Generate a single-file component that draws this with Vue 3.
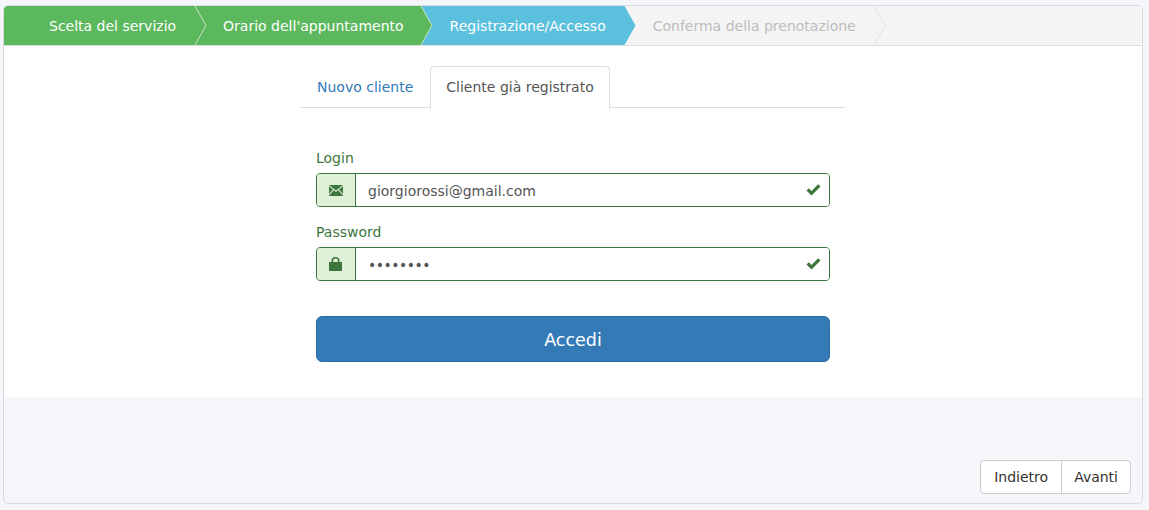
<script setup>
const steps = [
  { label: 'Scelta del servizio', state: 'done' },
  { label: "Orario dell'appuntamento", state: 'done' },
  { label: 'Registrazione/Accesso', state: 'current' },
  { label: 'Conferma della prenotazione', state: 'todo' },
]
</script>

<template>
  <div class="page">
    <div class="wizard">
      <!-- Steps -->
      <ul class="steps">
        <li v-for="step in steps" :key="step.label" class="step" :class="step.state">
          {{ step.label }}
          <svg class="arrow" width="13" height="39" viewBox="0 0 13 39">
            <path class="arrow-fill" d="M0 0 L1 0 L12 19.5 L1 39 L0 39 Z" />
            <path class="arrow-line" d="M1 0 L12 19.5 L1 39" />
          </svg>
        </li>
      </ul>

      <div class="content">
        <div class="login">
          <!-- Tabs -->
          <div class="tabs">
            <a class="tab">Nuovo cliente</a>
            <a class="tab active">Cliente già registrato</a>
          </div>

          <form class="form" @submit.prevent>
            <label class="label">Login</label>
            <div class="field">
              <span class="addon">
                <svg width="14" height="11" viewBox="0 0 14 11">
                  <path d="M0 0 H14 L7 5.6 Z" />
                  <path d="M0 1.2 L4 4.6 L0 9 Z" />
                  <path d="M14 1.2 L10 4.6 L14 9 Z" />
                  <path d="M4.8 5.3 L7 7.1 L9.2 5.3 L14 10.5 V11 H0 V10.5 Z" />
                </svg>
              </span>
              <input class="input" type="text" value="giorgiorossi@gmail.com" />
              <svg class="check" width="15" height="12" viewBox="0 0 15 12">
                <path d="M0.5 6.5 L2.8 4.2 L5.5 6.9 L12.2 0.2 L14.5 2.5 L5.5 11.5 Z" />
              </svg>
            </div>

            <label class="label">Password</label>
            <div class="field">
              <span class="addon">
                <svg class="lock" width="13" height="14" viewBox="0 0 13 14">
                  <path fill-rule="evenodd" d="M6.5 0 C9 0 10.5 1.4 10.5 3.5 V5 H12.5 C12.8 5 13 5.2 13 5.5 V13.5 C13 13.8 12.8 14 12.5 14 H0.5 C0.2 14 0 13.8 0 13.5 V5.5 C0 5.2 0.2 5 0.5 5 H2.5 V3.5 C2.5 1.4 4 0 6.5 0 Z M6.5 1.6 C5.1 1.6 4.2 2.3 4.2 3.6 V5 H8.8 V3.6 C8.8 2.3 7.9 1.6 6.5 1.6 Z" />
                </svg>
              </span>
              <input class="input password" type="password" value="password" />
              <svg class="check" width="15" height="12" viewBox="0 0 15 12">
                <path d="M0.5 6.5 L2.8 4.2 L5.5 6.9 L12.2 0.2 L14.5 2.5 L5.5 11.5 Z" />
              </svg>
            </div>

            <button class="submit" type="submit">Accedi</button>
          </form>
        </div>
      </div>

      <div class="footer">
        <div class="btn-group">
          <button class="btn" type="button">Indietro</button>
          <button class="btn" type="button">Avanti</button>
        </div>
      </div>
    </div>
  </div>
</template>

<style>
html,
body {
  margin: 0;
  background: #f5f6fa;
}
</style>

<style scoped>
.page {
  height: 510px;
  box-sizing: border-box;
  padding: 5px 6px 5px 3px;
  font-family: "DejaVu Sans", Verdana, sans-serif;
  font-size: 14px;
  color: #555;
}

.wizard {
  height: 499px;
  box-sizing: border-box;
  border: 1px solid #d9dbdf;
  border-radius: 5px;
  overflow: hidden;
  display: flex;
  flex-direction: column;
}

/* Steps */
.steps {
  list-style: none;
  margin: 0;
  padding: 0;
  height: 40px;
  box-sizing: border-box;
  border-bottom: 1px solid #dddddd;
  background: #f4f4f5;
  display: flex;
}

.step {
  position: relative;
  height: 39px;
  line-height: 41px;
  padding: 0 18px 0 29px;
  white-space: nowrap;
  color: #fff;
}

.step:first-child {
  padding-left: 45px;
}

.step:nth-child(2) {
  padding-right: 16px;
}

.step:nth-child(3) {
  padding: 0 17px 0 30px;
}

.step:nth-child(4) {
  padding: 0 17px 0 30px;
}

.arrow {
  position: absolute;
  left: 100%;
  top: 0;
  z-index: 1;
}

.arrow-fill {
  fill: #f4f4f5;
}

.arrow-line {
  fill: none;
  stroke: #e2e2e2;
  stroke-width: 1;
}

.done {
  background: #5cb85c;
}

.done .arrow-fill {
  fill: #5cb85c;
}

.done .arrow-line {
  stroke: #c9e4c9;
}

.current {
  background: #5bc0de;
}

.current .arrow-fill {
  fill: #5bc0de;
}

.current .arrow-line {
  stroke: #5bc0de;
}

.todo {
  color: #bdbdbd;
}

/* Content */
.content {
  height: 351px;
  background: #fff;
  display: flex;
  justify-content: center;
}

.login {
  width: 544px;
  padding-top: 20px;
}

.tabs {
  display: flex;
  height: 42px;
  box-sizing: border-box;
  border-bottom: 1px solid #dddddd;
}

.tab {
  height: 41px;
  line-height: 41px;
  padding: 0 15px;
  margin-right: 1px;
  color: #337ab7;
  border: 1px solid transparent;
  border-bottom: 0;
  border-radius: 4px 4px 0 0;
}

.tab.active {
  height: 42px;
  color: #555;
  background: #fff;
  border-color: #dddddd;
}

.form {
  display: flex;
  flex-direction: column;
  padding: 41px 15px 0;
}

.label {
  height: 19px;
  line-height: 19px;
  margin-bottom: 5px;
  color: #3c763d;
}

.field {
  position: relative;
  display: flex;
  height: 34px;
  box-sizing: border-box;
  border: 1px solid #3c763d;
  border-radius: 4px;
  margin-bottom: 16px;
  overflow: hidden;
}

.addon {
  width: 38px;
  flex: none;
  background: #dff0d8;
  border-right: 1px solid #3c763d;
  display: flex;
  align-items: center;
  justify-content: center;
}

.addon path {
  fill: #3c763d;
}

.lock {
  margin-right: 1px;
}

.input {
  flex: 1;
  min-width: 0;
  border: 0;
  outline: 0;
  padding: 2px 12px 0;
  font: inherit;
  color: #555;
  background: #fff;
}

.password {
  letter-spacing: -0.5px;
}

.check {
  position: absolute;
  right: 8px;
  top: 10px;
}

.check path {
  fill: #3c763d;
}

.submit {
  height: 46px;
  margin-top: 19px;
  padding-top: 2px;
  border: 1px solid #2e6da4;
  border-radius: 6px;
  background: #337ab7;
  color: #fff;
  font: inherit;
  font-size: 17.5px;
}

/* Footer */
.footer {
  flex: 1;
  display: flex;
  justify-content: flex-end;
  align-items: flex-end;
  padding: 0 11px 9px 0;
}

.btn-group {
  display: flex;
}

.btn {
  height: 34px;
  box-sizing: border-box;
  padding: 0 12px;
  border: 1px solid #cccccc;
  background: #fff;
  color: #333;
  font: inherit;
  border-radius: 4px 0 0 4px;
}

.btn:first-child {
  padding: 0 13px;
}

.btn + .btn {
  margin-left: -1px;
  border-radius: 0 4px 4px 0;
}
</style>
